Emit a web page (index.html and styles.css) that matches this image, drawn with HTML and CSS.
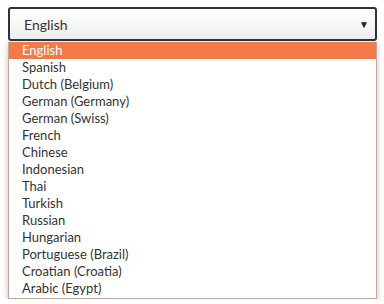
FILE: index.html
```html
<!DOCTYPE html>
<html lang="en">
  <head>
    <meta charset="UTF-8" />
    <title>Language select</title>
    <link rel="stylesheet" href="styles.css">
  </head>
  <body>
    <div class="picker">
      <div class="select">
        <span class="value">English</span>
        <span class="arrow">&#9660;</span>
      </div>
      <ul class="options">
        <li class="active">English</li>
        <li>Spanish</li>
        <li>Dutch (Belgium)</li>
        <li>German (Germany)</li>
        <li>German (Swiss)</li>
        <li>French</li>
        <li>Chinese</li>
        <li>Indonesian</li>
        <li>Thai</li>
        <li>Turkish</li>
        <li>Russian</li>
        <li>Hungarian</li>
        <li>Portuguese (Brazil)</li>
        <li>Croatian (Croatia)</li>
        <li>Arabic (Egypt)</li>
      </ul>
    </div>
  </body>
</html>
```

FILE: styles.css
```css
body {
  margin: 0;
  padding: 7px 7px 0 8px;
  background: #fff;
  font-family: Lato, "Open Sans", sans-serif;
  color: #333;
}

.picker {
  width: 369px;
}

.select {
  display: flex;
  align-items: center;
  justify-content: space-between;
  height: 30px;
  padding: 0 6px 0 14px;
  border: 2px solid #2b3340;
  border-radius: 3px;
  background: linear-gradient(#ffffff, #eeeeee);
  font-size: 14px;
}

.arrow {
  font-size: 10px;
  color: #222;
}

.options {
  list-style: none;
  margin: 1px 0 0;
  padding: 0 0 1px;
  border: 1px solid #c9a69c;
  border-top: none;
  background: #fff;
  box-shadow: 0 2px 6px rgba(0, 0, 0, 0.25);
}

.options li {
  height: 17px;
  line-height: 17px;
  padding-left: 13px;
  font-size: 13px;
  color: #333;
}

.options li.active {
  background: #f07a48;
  color: #fff;
}
```
